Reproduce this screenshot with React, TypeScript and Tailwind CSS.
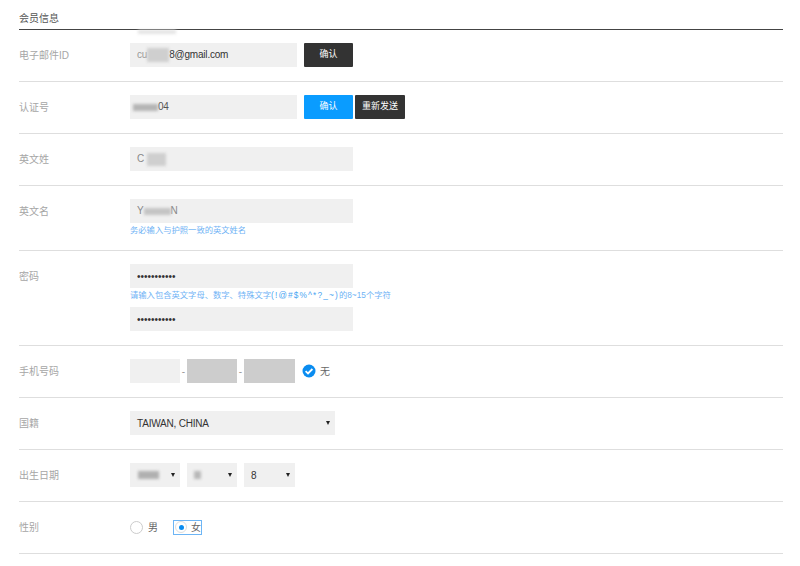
import type { ReactNode } from 'react';

const font = {
  fontFamily: '"Liberation Sans", "Noto Sans CJK SC", sans-serif',
};

const fieldClass = 'h-6 bg-[#f0f0f0] px-[7px] text-[#333] outline-none';
const valueClass = 'text-[10px] tracking-[-0.2px]';

function Row({ label, children }: { label: string; children: ReactNode }) {
  return (
    <div className="flex border-b border-[#dedede] pt-[13px] pb-[14px]">
      <div className="h-6 w-[111px] shrink-0 pt-[1px] text-[10px] leading-6 text-[#a6a6a6]">
        {label}
      </div>
      <div className="min-w-0 flex-1">{children}</div>
    </div>
  );
}

// smudge that hides private text in the screenshot
function Blur({ className }: { className: string }) {
  return <span className={`absolute blur-[1.5px] ${className}`} />;
}

function Hint({ children }: { children: ReactNode }) {
  return (
    <p className="h-[12px] text-[8.3px] leading-[12px] whitespace-nowrap text-[#6fb3f5]">
      {children}
    </p>
  );
}

function Btn({
  children,
  className,
}: {
  children: ReactNode;
  className: string;
}) {
  return (
    <button
      type="button"
      className={`h-6 rounded-[1px] text-[9px] text-white ${className}`}
    >
      {children}
    </button>
  );
}

function Select({
  width,
  children,
}: {
  width: string;
  children?: ReactNode;
}) {
  return (
    <div
      className={`relative flex items-center justify-between ${valueClass} ${fieldClass} ${width}`}
    >
      <span>{children}</span>
      <span className="mr-[-2px] h-0 w-0 border-x-[2.5px] border-t-[4px] border-x-transparent border-t-[#222]" />
    </div>
  );
}

export default function App() {
  return (
    <div
      className="h-[566px] w-[800px] overflow-hidden bg-white pr-[17px] pl-[19px]"
      style={font}
    >
      <h2 className="h-[30px] border-b border-[#444] pt-[13px] text-[10px] leading-[12px] font-normal text-[#555]">
        会员信息
      </h2>

      <Row label="电子邮件ID">
        <div className="flex">
          <div className={`relative w-[167px] leading-6 ${valueClass} ${fieldClass}`}>
            <span className="text-[#999]">cu</span>
            <span className="ml-[22px]">8@gmail.com</span>
            <Blur className="top-[5px] left-[17px] h-[14px] w-[22px] bg-[#cfcfcf]" />
            <Blur className="top-[-13px] left-[8px] h-[4px] w-[38px] bg-[#e4e4e4]" />
          </div>
          <Btn className="ml-[7px] w-[49px] bg-[#333]">确认</Btn>
        </div>
      </Row>

      <Row label="认证号">
        <div className="flex">
          <div className={`relative w-[167px] leading-6 ${valueClass} ${fieldClass}`}>
            <span className="ml-[21px] text-[#555]">04</span>
            <Blur className="top-[9px] left-[3px] h-[7px] w-[25px] bg-[#b5b5b5]" />
          </div>
          <Btn className="ml-[7px] w-[49px] bg-[#0a9cff]">确认</Btn>
          <Btn className="ml-[2px] w-[50px] bg-[#333]">重新发送</Btn>
        </div>
      </Row>

      <Row label="英文姓">
        <div className={`relative w-[223px] leading-6 ${valueClass} ${fieldClass}`}>
          <span className="text-[#888]">C</span>
          <Blur className="top-[6px] left-[17px] h-[13px] w-[19px] bg-[#cfcfcf]" />
        </div>
      </Row>

      <Row label="英文名">
        <div className={`relative w-[223px] leading-6 ${valueClass} ${fieldClass}`}>
          <span className="text-[#888]">Y</span>
          <span className="ml-[27px] text-[#888]">N</span>
          <Blur className="top-[9px] left-[14px] h-[7px] w-[27px] bg-[#c4c4c4]" />
        </div>
        <div className="mt-[1px]">
          <Hint>务必输入与护照一致的英文姓名</Hint>
        </div>
      </Row>

      <Row label="密码">
        <input
          type="password"
          readOnly
          value="abcdefghijk"
          className={`block w-[223px] text-[10px] ${fieldClass}`}
        />
        <div className="mt-[1px] mb-[6px]">
          <Hint>
            请输入包含英文字母、数字、特殊文字
            <span className="tracking-[1.15px] text-[#4ba5f2]">(!@#$%^*?_~)</span>
            的8~15个字符
          </Hint>
        </div>
        <input
          type="password"
          readOnly
          value="abcdefghijk"
          className={`block w-[223px] text-[10px] ${fieldClass}`}
        />
      </Row>

      <Row label="手机号码">
        <div className="flex items-center text-[10px] text-[#999]">
          <div className="h-6 w-[50px] bg-[#f0f0f0]" />
          <span className="w-[7px] text-center">-</span>
          <div className="h-6 w-[50px] bg-[#cdcdcd]" />
          <span className="w-[7px] text-center">-</span>
          <div className="h-6 w-[51px] bg-[#cdcdcd]" />
          <svg viewBox="0 0 14 14" className="ml-[7px] h-[14px] w-[14px]">
            <circle cx="7" cy="7" r="6.5" fill="#0a8cf0" />
            <path
              d="M3.6 7.2 L6 9.4 L10.4 5"
              fill="none"
              stroke="#fff"
              strokeWidth="1.8"
            />
          </svg>
          <span className="ml-[4px] text-[#666]">无</span>
        </div>
      </Row>

      <Row label="国籍">
        <Select width="w-[205px]">TAIWAN, CHINA</Select>
      </Row>

      <Row label="出生日期">
        <div className="flex gap-[7px]">
          <div className="relative">
            <Select width="w-[50px]" />
            <Blur className="top-[8px] left-[8px] h-[8px] w-[21px] bg-[#b0b0b0]" />
          </div>
          <div className="relative">
            <Select width="w-[50px]" />
            <Blur className="top-[8px] left-[7px] h-[8px] w-[7px] bg-[#b8b8b8]" />
          </div>
          <Select width="w-[51px]">8</Select>
        </div>
      </Row>

      <Row label="性别">
        <div className="flex h-6 items-center text-[10px] text-[#666]">
          <span className="h-[13px] w-[13px] rounded-full border border-[#ccc] bg-white" />
          <span className="ml-[5px]">男</span>
          <div className="ml-[15px] flex h-[15px] w-[29px] items-center border border-[#6db5f5]">
            <span className="ml-[1px] flex h-[12px] w-[12px] items-center justify-center rounded-full border border-[#ddd]">
              <span className="h-[5px] w-[5px] rounded-full bg-[#0a8cf0]" />
            </span>
            <span className="ml-[4px]">女</span>
          </div>
        </div>
      </Row>
    </div>
  );
}
